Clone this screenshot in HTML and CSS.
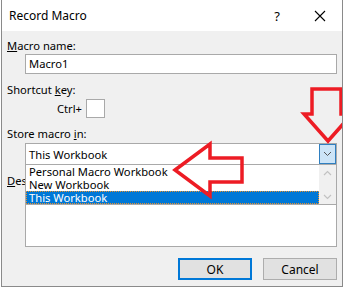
FILE: index.html
```html
<!DOCTYPE html>
<html lang="en">
<head>
    <meta charset="UTF-8">
    <title>Record Macro</title>
    <link rel="stylesheet" href="styles.css">
</head>
<body>
    <div class="dialog">
        <div class="titlebar">
            <span class="title">Record Macro</span>
            <span class="help">?</span>
            <svg class="close" width="12" height="12" viewBox="0 0 12 12">
                <path d="M1 1 L11 11 M11 1 L1 11" stroke="#000" stroke-width="1.1" fill="none"/>
            </svg>
        </div>

        <div class="content">
            <div class="label"><u>M</u>acro name:</div>
            <div class="textbox indent">Macro1</div>

            <div class="label gap"><span>Shortcut </span><u>k</u>ey:</div>
            <div class="ctrl-row">
                <span>Ctrl+</span>
                <div class="keybox"></div>
            </div>

            <div class="label gap">Store macro <u>i</u>n:</div>
            <div class="combo indent">
                <span class="combo-text">This Workbook</span>
                <div class="combo-btn">
                    <svg width="9" height="6" viewBox="0 0 9 6">
                        <path d="M1 1 L4.5 4.5 L8 1" stroke="#555" stroke-width="1" fill="none"/>
                    </svg>
                </div>
                <div class="droplist">
                    <div class="items">
                        <div class="item">Personal Macro Workbook</div>
                        <div class="item">New Workbook</div>
                        <div class="item selected">This Workbook</div>
                    </div>
                    <div class="scrollbar">
                        <svg width="9" height="6" viewBox="0 0 9 6"><path d="M1 5 L4.5 1.5 L8 5" stroke="#c2c2c2" stroke-width="1.2" fill="none"/></svg>
                        <svg width="9" height="6" viewBox="0 0 9 6"><path d="M1 1 L4.5 4.5 L8 1" stroke="#c2c2c2" stroke-width="1.2" fill="none"/></svg>
                    </div>
                </div>
            </div>

            <div class="label gap"><u>D</u>escription:</div>
            <div class="description indent"></div>

            <div class="buttons">
                <div class="btn default">OK</div>
                <div class="btn">Cancel</div>
            </div>
        </div>

        <!-- red callout arrows drawn on top of the screenshot -->
        <svg class="callouts" width="344" height="288" viewBox="0 0 344 288">
            <polygon points="311,89 340,89 340,114 351,114 327,141 303,114 311,114" fill="none" stroke="#ed1c24" stroke-width="3.5" stroke-linejoin="miter"/>
            <polygon points="174,170 209,144 209,158 241,158 241,182 209,182 209,196" fill="none" stroke="#ed1c24" stroke-width="3.5" stroke-linejoin="miter"/>
        </svg>
    </div>
</body>
</html>
```

FILE: styles.css
```css
body {
    margin: 0;
    font-family: "Noto Sans", "Open Sans", sans-serif;
    font-size: 11.2px;
    color: #000;
    background: #fff;
}
.dialog {
    position: relative;
    width: 342px;
    height: 287px;
    margin-left: 1px;
    box-sizing: border-box;
    border-left: 1px solid #8a8a8a;
    border-right: 1px solid #8a8a8a;
    border-bottom: 1px solid #8a8a8a;
    background: #f0f0f0;
    overflow: hidden;
}
.titlebar {
    height: 31px;
    background: #fff;
    display: flex;
    align-items: center;
    padding-left: 7px;
}
.title {
    flex: 1;
    font-size: 12px;
}
.help {
    font-size: 13px;
    margin-right: 34px;
}
.close {
    margin-right: 16px;
}
.content {
    padding: 7px 5px 0 5px;
    display: flex;
    flex-direction: column;
}
.label {
    height: 16px;
    line-height: 16px;
}
.label.gap {
    margin-top: 8px;
}
.indent {
    margin-left: 18px;
}
.textbox {
    height: 20px;
    box-sizing: border-box;
    border: 1px solid #a9a9a9;
    background: #fff;
    line-height: 18px;
    padding-left: 3px;
}
.ctrl-row {
    display: flex;
    align-items: center;
    margin-top: 1px;
    margin-left: 50px;
    gap: 4px;
}
.keybox {
    width: 19px;
    height: 19px;
    box-sizing: border-box;
    border: 1px solid #a9a9a9;
    background: #fff;
}
.combo {
    position: relative;
    margin-top: 1px;
    height: 22px;
    box-sizing: border-box;
    border: 1px solid #a9a9a9;
    background: #fff;
    display: flex;
    align-items: center;
}
.combo-text {
    flex: 1;
    padding-left: 3px;
}
.combo-btn {
    width: 17px;
    height: 20px;
    box-sizing: border-box;
    border: 1px solid #2f7fc0;
    background: #cce4f7;
    display: flex;
    align-items: center;
    justify-content: center;
}
.droplist {
    position: absolute;
    top: 100%;
    left: -1px;
    right: -1px;
    height: 41px;
    box-sizing: border-box;
    border: 1px solid #a9a9a9;
    background: #fff;
    display: flex;
    z-index: 2;
}
.items {
    flex: 1;
}
.item {
    height: 13px;
    line-height: 13px;
    padding-left: 3px;
    white-space: nowrap;
}
.item.selected {
    background: #0078d7;
    color: #fff;
    outline: 1px dotted #e8902c;
    outline-offset: -1px;
}
.scrollbar {
    width: 17px;
    background: #f0f0f0;
    display: flex;
    flex-direction: column;
    align-items: center;
    justify-content: space-between;
    padding: 5px 0 4px;
    box-sizing: border-box;
}
.description {
    margin-top: 1px;
    height: 57px;
    box-sizing: border-box;
    border: 1px solid #a9a9a9;
    background: #fff;
}
.buttons {
    display: flex;
    justify-content: flex-end;
    gap: 11px;
    margin-top: 11px;
}
.btn {
    width: 74px;
    height: 22px;
    box-sizing: border-box;
    border: 1px solid #adadad;
    background: #e1e1e1;
    display: flex;
    align-items: center;
    justify-content: center;
    font-size: 12px;
}
.btn.default {
    border: 2px solid #0078d7;
}
.callouts {
    position: absolute;
    top: 0;
    left: -1px;
    z-index: 5;
    pointer-events: none;
}
```
